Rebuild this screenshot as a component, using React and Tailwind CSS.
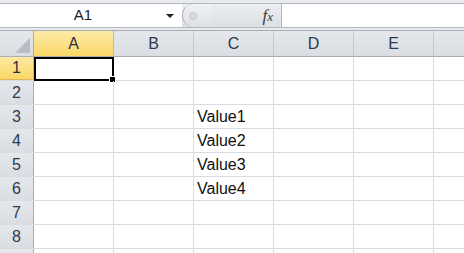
import React from "react";

const columns = ["A", "B", "C", "D", "E", ""];
const rows = [1, 2, 3, 4, 5, 6, 7, 8, 9];

// values shown in column C
const values = { 3: "Value1", 4: "Value2", 5: "Value3", 6: "Value4" };

const FormulaBar = () => (
  <div className="h-[28px] bg-[#e8eaee] pt-[3px]">
    <div className="flex h-[25px] border-y border-[#b4b9c0]">
      <div className="relative flex w-[182px] shrink-0 items-center bg-white">
        <span className="w-[166px] text-center text-[15px] text-[#1e1e1e]">A1</span>
        <span className="h-0 w-0 border-x-[4px] border-t-[4px] border-x-transparent border-t-[#222]" />
      </div>
      <div className="relative flex w-[100px] shrink-0 items-center border-r border-[#b4b9c0] bg-gradient-to-b from-[#eceef1] to-[#dcdfe4]">
        <div className="flex h-full w-[30px] items-center rounded-l-full border-l border-[#a9aeb5] bg-gradient-to-b from-[#f1f2f4] to-[#dde0e4] pl-[6px]">
          <span className="h-[8px] w-[8px] rounded-full border border-[#c2c6cb] bg-[#d6d9dd]" />
        </div>
        <span className="ml-auto mr-[8px] font-['Liberation_Serif',serif] text-[17px] italic leading-none text-[#3a3a3a]">
          f<span className="text-[13px]">x</span>
        </span>
      </div>
      <div className="flex-1 bg-white" />
    </div>
  </div>
);

const HeaderRow = () => (
  <div className="flex h-[27px] border-y border-[#a9aeb4] bg-gradient-to-b from-[#e4e7eb] to-[#dadee3]">
    <div className="relative w-[34px] shrink-0 border-r border-[#a9aeb4]">
      <div className="absolute bottom-[3px] right-[3px] h-0 w-0 border-b-[15px] border-l-[15px] border-b-[#b9bec5] border-l-transparent" />
    </div>
    {columns.map((c, i) => (
      <div
        key={i}
        className={
          i === 0
            ? "flex w-[80px] shrink-0 items-center justify-center border-r border-[#e2b65a] bg-gradient-to-b from-[#fdeba6] to-[#fbd766] text-[16px] text-[#2b3140]"
            : "flex w-[80px] shrink-0 items-center justify-center border-r border-[#c3c8ce] text-[16px] text-[#2b3a4e]"
        }
      >
        {c}
      </div>
    ))}
  </div>
);

const GridRow = ({ n }) => (
  <div className="flex h-[24px] border-b border-[#dadcdd]">
    <div
      className={
        n === 1
          ? "flex w-[34px] shrink-0 items-center justify-center border-r border-b border-[#e2b65a] bg-gradient-to-b from-[#fde9a0] to-[#fbd766] text-[16px] text-[#2b3140]"
          : "flex w-[34px] shrink-0 items-center justify-center border-r border-[#a9aeb4] bg-gradient-to-b from-[#e4e7eb] to-[#dadee3] text-[16px] text-[#2b3a4e]"
      }
    >
      {n < 9 && n}
    </div>
    {columns.map((c, i) => (
      <div key={i} className="relative flex w-[80px] shrink-0 items-center border-r border-[#dadcdd] pl-[3px] text-[16px] text-[#111]">
        {i === 2 && values[n]}
        {i === 0 && n === 1 && (
          <div className="absolute left-[0px] top-[0px] h-[24px] w-[80px] border-2 border-black">
            <div className="absolute -bottom-[4px] -right-[4px] h-[7px] w-[7px] border border-white bg-black" />
          </div>
        )}
      </div>
    ))}
  </div>
);

const App = () => {
  return (
    <div className="h-[253px] w-[464px] overflow-hidden bg-white font-['Liberation_Sans',Arial,sans-serif]">
      <FormulaBar />
      <div className="h-[2px] bg-[#e8eaee]" />
      <HeaderRow />
      {rows.map((n) => (
        <GridRow key={n} n={n} />
      ))}
    </div>
  );
};

export default App;
